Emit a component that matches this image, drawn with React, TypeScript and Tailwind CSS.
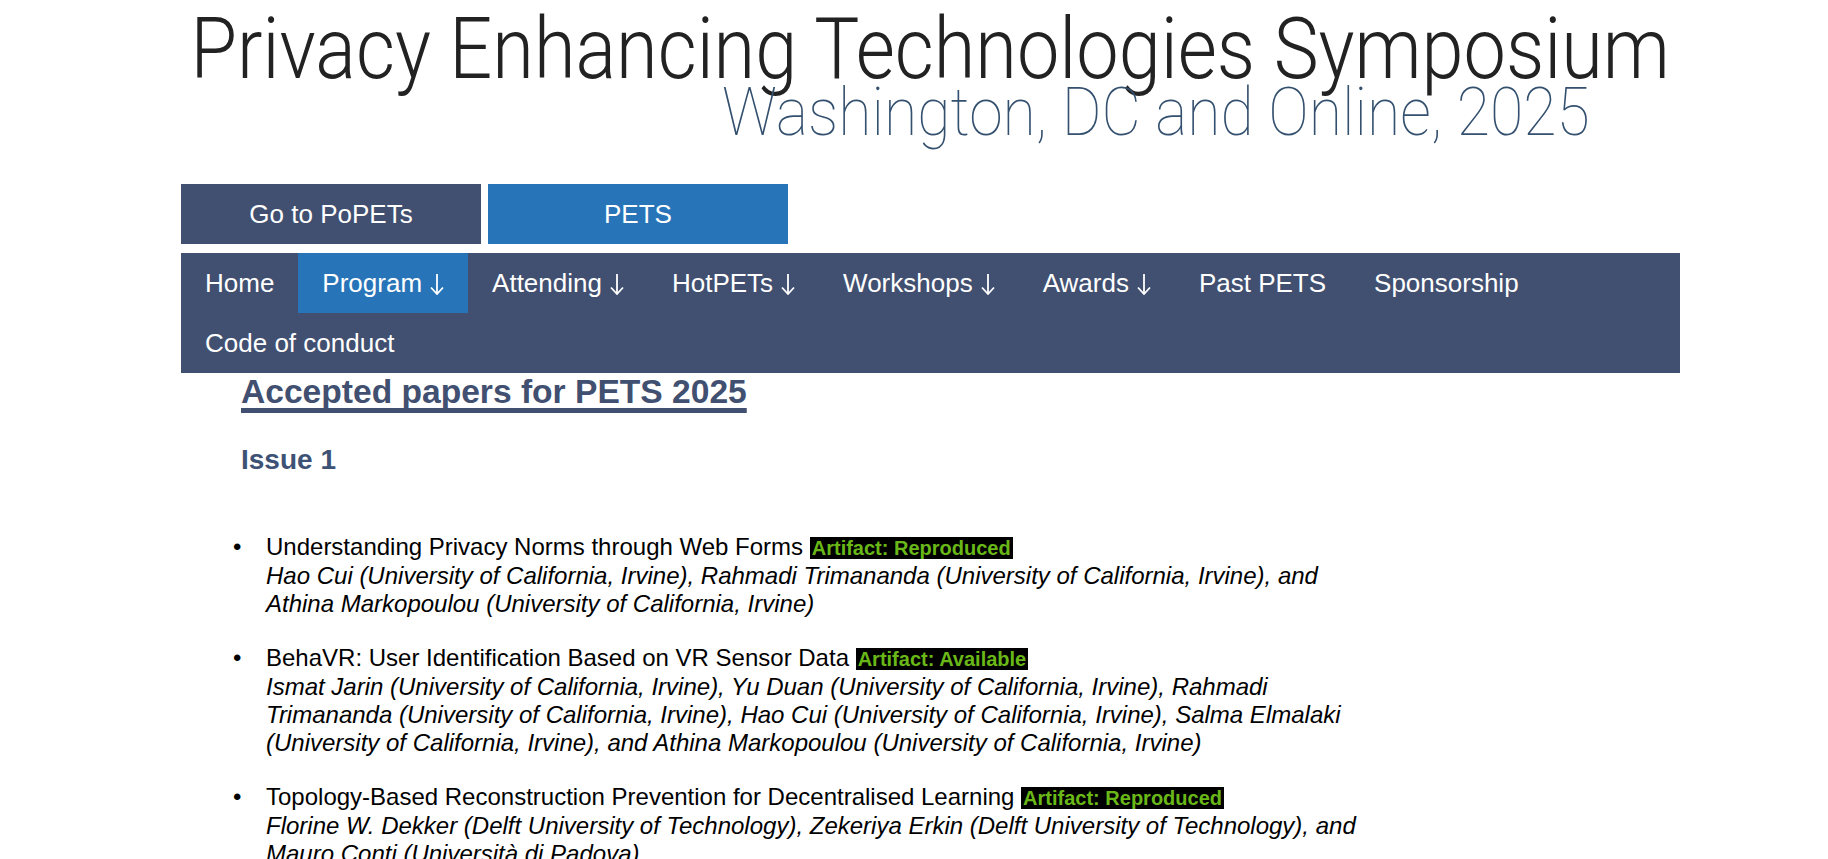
interface Paper {
  title: string;
  badge: string;
  authors: string;
}

const navItems = [
  { label: 'Home', arrow: false },
  { label: 'Program', arrow: true, active: true },
  { label: 'Attending', arrow: true },
  { label: 'HotPETs', arrow: true },
  { label: 'Workshops', arrow: true },
  { label: 'Awards', arrow: true },
  { label: 'Past PETS', arrow: false },
  { label: 'Sponsorship', arrow: false },
  { label: 'Code of conduct', arrow: false },
];

const papers: Paper[] = [
  {
    title: 'Understanding Privacy Norms through Web Forms',
    badge: 'Artifact: Reproduced',
    authors:
      'Hao Cui (University of California, Irvine), Rahmadi Trimananda (University of California, Irvine), and Athina Markopoulou (University of California, Irvine)',
  },
  {
    title: 'BehaVR: User Identification Based on VR Sensor Data',
    badge: 'Artifact: Available',
    authors:
      'Ismat Jarin (University of California, Irvine), Yu Duan (University of California, Irvine), Rahmadi Trimananda (University of California, Irvine), Hao Cui (University of California, Irvine), Salma Elmalaki (University of California, Irvine), and Athina Markopoulou (University of California, Irvine)',
  },
  {
    title: 'Topology-Based Reconstruction Prevention for Decentralised Learning',
    badge: 'Artifact: Reproduced',
    authors:
      'Florine W. Dekker (Delft University of Technology), Zekeriya Erkin (Delft University of Technology), and Mauro Conti (Università di Padova)',
  },
];

function DownArrow() {
  return (
    <svg className="ml-[8px] mt-[2px]" width="14" height="21" viewBox="0 0 14 21" fill="none" stroke="currentColor" strokeWidth="1.8">
      <path d="M7 0v19.5" />
      <path d="M1 13.5l6 6.5 6-6.5" />
    </svg>
  );
}

export default function App() {
  return (
    <div className="min-h-[859px] bg-white font-['Liberation_Sans',Arial,sans-serif] text-black">
      <div className="ml-[181px] w-[1499px]">
        {/* logo header */}
        <header className="pt-[7px] font-['Roboto',sans-serif]">
          <div className="flex justify-center">
            <span className="inline-block origin-center scale-x-[0.89] whitespace-nowrap text-[85px] font-light leading-[85px] text-[#222222]">
              Privacy Enhancing Technologies Symposium
            </span>
          </div>
          <div className="-mt-[12px] pl-[541px]">
            <span className="inline-block origin-left scale-x-[0.92] whitespace-nowrap text-[66px] font-thin leading-[66px] text-[#34506f]">
              Washington, DC and Online, 2025
            </span>
          </div>
        </header>

        <div className="mt-[38px] flex gap-[7px]">
          <a className="flex h-[60px] w-[300px] items-center justify-center bg-[#414f70] text-[26px] text-white">
            Go to PoPETs
          </a>
          <a className="flex h-[60px] w-[300px] items-center justify-center bg-[#2874b8] text-[26px] text-white">
            PETS
          </a>
        </div>

        <nav className="mt-[9px] flex flex-wrap bg-[#414f70]">
          {navItems.map((item) => (
            <a
              key={item.label}
              className={`flex h-[60px] items-center px-[24px] text-[26px] text-white ${item.active ? 'bg-[#2874b8]' : ''}`}
            >
              {item.label}
              {item.arrow && <DownArrow />}
            </a>
          ))}
        </nav>

        <main className="pl-[60px]">
          <h1 className="inline-block text-[33.6px] font-bold leading-[38px] text-[#414f70] underline decoration-[5px] underline-offset-[5px] [text-decoration-skip-ink:none]">
            Accepted papers for PETS 2025
          </h1>
          <h2 className="mt-[33px] text-[28px] font-bold leading-[32px] text-[#3e5275]">Issue 1</h2>

          <ul className="mt-[57px] w-[1130px] list-none pl-[25px] text-[24px] leading-[28px]">
            {papers.map((p) => (
              <li
                key={p.title}
                className="mb-[26px] before:-ml-[33px] before:inline-block before:w-[33px] before:content-['•']"
              >
                {p.title}{' '}
                <span className="bg-black px-[2px] text-[20px] font-bold text-[#69b818]">{p.badge}</span>
                <br />
                <i>{p.authors}</i>
              </li>
            ))}
          </ul>
        </main>
      </div>
    </div>
  );
}
